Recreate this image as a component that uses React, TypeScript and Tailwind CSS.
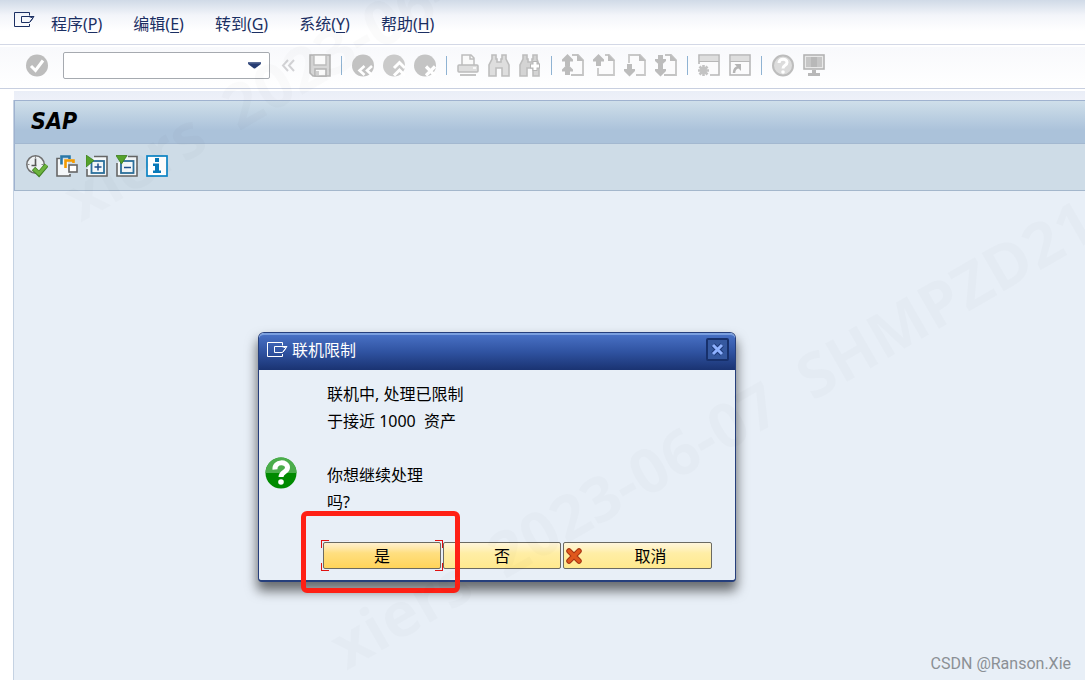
import type { ReactNode } from "react"

interface MenuEntry {
  label: string
  hotkey: string
}

interface ToolIcon {
  title: string
  art: ReactNode
}

const menus: MenuEntry[] = [
  { label: "程序", hotkey: "P" },
  { label: "编辑", hotkey: "E" },
  { label: "转到", hotkey: "G" },
  { label: "系统", hotkey: "Y" },
  { label: "帮助", hotkey: "H" },
]

const pageSheet = <path d="M10 1h6l5 5v15H9" fill="#fbfbfc" stroke="#c4c4c4" strokeWidth="1.800" />
const pageFold = <path d="M15 0v7h7z" fill="#bdbdbd" />
const arrowUp = "M5.500 0L11 5.500v2H8V12H3V7.500H0v-2z"
const arrowDown = "M3 10h5v5h3v2l-5.500 5.500L0 17v-2h3z"

// Standard toolbar, one array per separator group
const toolGroups: ToolIcon[][] = [
  [
    {
      title: "保存",
      art: (
        <>
          <path d="M1 1h20v21H4l-3-3z" fill="#d6d6d6" stroke="#b4b4b4" strokeWidth="1.600" />
          <path d="M5 1h12v10H5z" fill="#fafafa" stroke="#bcbcbc" strokeWidth="1.400" />
          <path d="M6 15h11v7H6z" fill="#fafafa" stroke="#b4b4b4" strokeWidth="1.600" />
          <path d="M7 17h3v4H7z" fill="#d0d0d0" />
        </>
      ),
    },
  ],
  [
    {
      title: "返回",
      art: (
        <>
          <circle cx="11" cy="11.500" r="11" fill="#c2c2c2" />
          <path d="M12.500 12l-5 4.500 5 4.500M20 12l-5 4.500 5 4.500" fill="none" stroke="#fff" strokeWidth="2.600" />
        </>
      ),
    },
    {
      title: "退出",
      art: (
        <>
          <circle cx="11" cy="11.500" r="11" fill="#cacaca" />
          <path d="M11 14l5.500-5.500L22 14M11 21.500l5.500-5.500 5.500 5.500" fill="none" stroke="#fff" strokeWidth="3" />
        </>
      ),
    },
    {
      title: "中止",
      art: (
        <>
          <circle cx="11" cy="11.500" r="11" fill="#c4c4c4" />
          <path d="M12 12.500l9 9M21 12.500l-9 9" stroke="#fff" strokeWidth="3.200" />
        </>
      ),
    },
  ],
  [
    {
      title: "打印",
      art: (
        <>
          <path d="M5 11V1h9l3 3v7" fill="#fafafa" stroke="#bdbdbd" strokeWidth="1.500" />
          <path d="M13 1v4h4" fill="none" stroke="#bdbdbd" strokeWidth="1.500" />
          <rect x="1" y="11" width="20" height="7" rx="1" fill="#dedede" stroke="#bcbcbc" strokeWidth="1.500" />
          <path d="M16 14h3" stroke="#fff" strokeWidth="1.500" />
          <path d="M3 20h16v2H3z" fill="#c4c4c4" />
        </>
      ),
    },
    {
      title: "查找",
      art: (
        <path
          d="M4 1h4v4h1v3h4V5h1V1h4v4l3 6v11h-7v-8H8v8H1V11l3-6z"
          fill="#dedede"
          stroke="#bdbdbd"
          strokeWidth="1.600"
        />
      ),
    },
    {
      title: "继续查找",
      art: (
        <>
          <path
            d="M4 1h4v4h1v3h4V5h1V1h4v4l2 6v11h-6v-8H8v8H1V11l3-6z"
            fill="#d4d4d4"
            stroke="#bdbdbd"
            strokeWidth="1.600"
          />
          <path d="M16 7v10M11 12h10" stroke="#b5b5b5" strokeWidth="5" />
          <path d="M16 8v8M12 12h8" stroke="#fff" strokeWidth="3" />
        </>
      ),
    },
  ],
  [
    {
      title: "第一页",
      art: (
        <>
          {pageSheet}
          {pageFold}
          <path d={arrowUp} fill="#bcbcbc" />
          <path d="M5.500 10l5.500 5.500v2H8V21H3v-3.500H0v-2z" fill="#bcbcbc" />
        </>
      ),
    },
    {
      title: "上一页",
      art: (
        <>
          <path d="M12 1h4l5 5v15H5v-7" fill="#fbfbfc" stroke="#c8c8c8" strokeWidth="1.800" />
          {pageFold}
          <path d={arrowUp} fill="#bcbcbc" />
        </>
      ),
    },
    {
      title: "下一页",
      art: (
        <>
          <path d="M5 9V1h11l5 5v15h-9" fill="#fbfbfc" stroke="#c8c8c8" strokeWidth="1.800" />
          {pageFold}
          <path d={arrowDown} fill="#bcbcbc" />
        </>
      ),
    },
    {
      title: "最后一页",
      art: (
        <>
          {pageSheet}
          {pageFold}
          <path d="M3 1h5v4h3v2l-5.500 5L0 7V5h3z" fill="#bcbcbc" />
          <path d={arrowDown} fill="#bcbcbc" />
        </>
      ),
    },
  ],
  [
    {
      title: "新建会话",
      art: (
        <>
          <path d="M1 10V1h20v20h-9" fill="#fbfbfc" stroke="#b8b8b8" strokeWidth="1.600" />
          <path d="M2 2h18v5H2z" fill="#dedede" />
          <path d="M1 7.500h20" stroke="#b8b8b8" />
          <path d="M5.500 11v11M0 16.500h11M1.500 12.500l8 8M9.500 12.500l-8 8" stroke="#c3c3c3" strokeWidth="2.600" />
        </>
      ),
    },
    {
      title: "创建快捷方式",
      art: (
        <>
          <rect x="1" y="1" width="20" height="20" fill="#fbfbfc" stroke="#b8b8b8" strokeWidth="1.600" />
          <path d="M2 2h18v5H2z" fill="#dedede" />
          <path d="M1 7.500h20" stroke="#b8b8b8" />
          <path d="M5 19c0-4 2-5.500 5-6" fill="none" stroke="#b5b5b5" strokeWidth="2.500" />
          <path d="M5.500 10H12v7z" fill="#b5b5b5" />
        </>
      ),
    },
  ],
  [
    {
      title: "帮助",
      art: (
        <>
          <circle cx="11" cy="11.500" r="10" fill="#dcdcdc" stroke="#bdbdbd" strokeWidth="2" />
          <path d="M7 9c0-5 8-5 8-.5 0 3-4 2.500-4 6" fill="none" stroke="#fff" strokeWidth="3" />
          <circle cx="11" cy="18" r="1.800" fill="#fff" />
        </>
      ),
    },
    {
      title: "定制本地布局",
      art: (
        <>
          <rect x="1" y="1" width="20" height="14" fill="#e8e8e8" stroke="#b4b4b4" strokeWidth="1.600" />
          <path d="M3 3h16v10H3z" fill="#c6c6c6" />
          <path d="M8 3h6v10H8z" fill="#b8b8b8" />
          <path d="M9 16h4v4H9zM5 19h12v3H5z" fill="#b8b8b8" />
        </>
      ),
    },
  ],
]

const appTools: ToolIcon[] = [
  {
    title: "执行",
    art: (
      <>
        <circle cx="9.500" cy="9.500" r="8.700" fill="#eef2f4" stroke="#6f6f6f" strokeWidth="1.500" />
        <path d="M9.500 3.500V11M5.500 10.500h5" stroke="#555" strokeWidth="1.600" />
        <path d="M9.500 1v2M1.500 9.500h2M15.500 9.500h2M9.500 15v2" stroke="#888" />
        <path d="M7.500 13.500l5.500 5.500 7.500-9" fill="none" stroke="#3f7f22" strokeWidth="4.800" />
        <path d="M8 14l5 4.500 7.500-8.500" fill="none" stroke="#6cb33e" strokeWidth="3.200" />
      </>
    ),
  },
  {
    title: "获取变式",
    art: (
      <>
        <path d="M4 3.500H1V21h13v-2" fill="#f2f5f7" stroke="#666" strokeWidth="1.600" />
        <path d="M2 4.500h10V20H2z" fill="#f4f7f9" />
        <path d="M5.500 9.500V1.500h8V4" fill="none" stroke="#2b78a8" strokeWidth="2.600" />
        <path d="M9.500 13V5.500h8V8" fill="none" stroke="#f59b00" strokeWidth="2.600" />
        <rect x="13" y="10" width="8" height="7" fill="#fff" stroke="#666" strokeWidth="1.600" />
      </>
    ),
  },
  {
    title: "展开",
    art: (
      <>
        <path d="M8 1.500h13V21H1v-7" fill="#f4f8fa" stroke="#666" strokeWidth="1.600" />
        <rect x="5.500" y="6" width="12.500" height="12" fill="#f4f8fa" stroke="#2b6f9c" strokeWidth="1.800" />
        <path d="M12 8.500v7M8.500 12h7" stroke="#1e4f8f" strokeWidth="1.500" />
        <path d="M0 0l8 5.500L0 12z" fill="#55a22b" stroke="#3b7d1d" strokeWidth=".8" />
      </>
    ),
  },
  {
    title: "折叠",
    art: (
      <>
        <path d="M12 1.500h9V21H1V8" fill="#f4f8fa" stroke="#666" strokeWidth="1.600" />
        <rect x="5" y="6" width="12.500" height="12" fill="#f4f8fa" stroke="#2b6f9c" strokeWidth="1.800" />
        <path d="M8 12.500h7" stroke="#1e4f8f" strokeWidth="1.500" />
        <path d="M0 .5h11L5.500 9z" fill="#55a22b" stroke="#3b7d1d" strokeWidth=".8" />
      </>
    ),
  },
  {
    title: "信息",
    art: (
      <>
        <rect x="1" y="1" width="20" height="20" fill="#fff" stroke="#0b83c4" strokeWidth="1.700" />
        <path d="M9 3h4v4H9zM7 8.500h6v7h2V18H7v-2.500h2v-4.500H7z" fill="#0879b9" />
      </>
    ),
  },
]

function SessionGlyph() {
  return (
    <svg width="21" height="16" viewBox="0 0 21 16" fill="none" stroke="currentColor" aria-hidden="true">
      <path d="M15.500 3.500v-3H.5v14h15V12" />
      <path d="M7.500 4.500h12.500l-4.500 6h-8z" />
      <path d="M15 4.500l4 1.500-3 4" />
    </svg>
  )
}

function IconButton({ title, art }: ToolIcon) {
  return (
    <button type="button" aria-label={title} className="w-[22px] h-[23px] shrink-0">
      <svg width="22" height="23" viewBox="0 0 22 23">
        {art}
      </svg>
    </button>
  )
}

function MenuBar() {
  return (
    <nav className="flex items-center h-11 pl-[14px] bg-linear-to-b from-[#d0dae7] via-[#f3f5fa] via-35% to-white to-70% text-[#1b2f63]">
      <button type="button" aria-label="会话" className="mr-4 -translate-y-0.5">
        <SessionGlyph />
      </button>
      <div className="flex gap-[31px] pt-1">
        {menus.map((m) => (
          <button type="button" key={m.hotkey} className="text-base leading-6">
            {m.label}(<u className="underline-offset-2">{m.hotkey}</u>)
          </button>
        ))}
      </div>
    </nav>
  )
}

function StandardToolbar() {
  return (
    <div className="flex items-center h-[41px] pb-1 pl-[26px] gap-[9px] bg-linear-to-b from-[#f8f9fc] to-white">
      <button type="button" aria-label="确认" className="w-[22px] h-[23px] shrink-0">
        <svg width="22" height="23" viewBox="0 0 22 23">
          <circle cx="11" cy="11.500" r="11" fill="#bdbdbd" />
          <path d="M5 12l4.500 4.500L17 6.500" fill="none" stroke="#fff" strokeWidth="3" />
        </svg>
      </button>

      {/* Command field */}
      <div className="flex items-center w-[207px] h-[27px] shrink-0 ml-1.5 pr-2 border border-[#a6aab0] rounded-xs bg-white">
        <input type="text" aria-label="命令字段" className="flex-1 min-w-0 h-full px-1 text-base outline-none" />
        <button type="button" aria-label="历史记录">
          <svg width="13" height="7" viewBox="0 0 13 7">
            <path d="M0 0h13v2L7 6.500H6L0 2z" fill="#263c72" />
            <path d="M0 0h13v1.500H0z" fill="#5a6c96" />
          </svg>
        </button>
      </div>
      <button type="button" aria-label="收起" className="w-[21px] h-[23px] shrink-0">
        <svg width="21" height="23" viewBox="0 0 21 23" fill="none" stroke="#d2d2d5" strokeWidth="2">
          <path d="M9 6l-5 5.500L9 17M15 6l-5 5.500 5 5.500" />
        </svg>
      </button>

      {toolGroups.map((group, i) => (
        <div key={i} className="flex items-center gap-[9px]">
          {i > 0 && (
            <div className="flex justify-center w-[3px]">
              <div className="w-px h-[19px] bg-[#8fb3d3]" />
            </div>
          )}
          {group.map((tool) => (
            <IconButton key={tool.title} title={tool.title} art={tool.art} />
          ))}
        </div>
      ))}
    </div>
  )
}

function FocusCorners() {
  return (
    <>
      <span className="absolute -top-[3px] -left-[3px] size-2 border-t border-l border-[#e01010]" />
      <span className="absolute -top-[3px] -right-[3px] size-2 border-t border-r border-[#e01010]" />
      <span className="absolute -bottom-[3px] -left-[3px] size-2 border-b border-l border-[#e01010]" />
      <span className="absolute -bottom-[3px] -right-[3px] size-2 border-b border-r border-[#e01010]" />
    </>
  )
}

function LimitDialog() {
  return (
    <section
      role="dialog"
      aria-labelledby="dialog-title"
      className="absolute left-[258px] top-[332px] w-[478px] rounded-t-md rounded-b-sm border border-b-2 border-[#263f7c] bg-[#e8eff7] shadow-[0_8px_12px_1px_rgba(0,0,0,0.55)]"
    >
      <header className="flex items-center h-[37px] pl-2 pr-1.5 pb-1.5 rounded-t-[5px] border-t-2 border-[#7a9fdf] bg-linear-to-b from-[#4870c4] via-[#2f52a0] to-[#1a3372] text-white">
        <SessionGlyph />
        <h2 id="dialog-title" className="flex-1 ml-1 text-base leading-6">
          联机限制
        </h2>
        <button
          type="button"
          aria-label="关闭"
          className="flex items-center justify-center size-[23px] rounded-xs border-2 border-[#17306b] bg-[#35589f]"
        >
          <svg width="13" height="13" viewBox="0 0 13 13">
            <path d="M2 2l9 9M11 2l-9 9" stroke="#1c3878" strokeWidth="5" />
            <path d="M2 2l9 9M11 2l-9 9" stroke="#8fb2ff" strokeWidth="3" />
          </svg>
        </button>
      </header>

      <div className="flex items-center pt-[11px] pl-1.5">
        <svg width="32" height="32" viewBox="0 0 32 32" className="mt-12" aria-hidden="true">
          <circle cx="16" cy="16" r="15.500" fill="#008a00" />
          <path d="M.5 16a15.500 15.500 0 0 1 31 0z" fill="#4bad4b" />
          <path d="M10 12.500c-1-8.500 12.500-8.500 12.500-2 0 5-6.500 4-6.500 9.500" fill="none" stroke="#fff" strokeWidth="5" />
          <circle cx="16" cy="25" r="2.800" fill="#fff" />
        </svg>
        <div className="ml-[30px] text-base leading-[27px] text-black whitespace-pre">
          <p>联机中, 处理已限制</p>
          <p>于接近 1000  资产</p>
          <p> </p>
          <p>你想继续处理</p>
          <p>吗?</p>
        </div>
      </div>

      <div className="flex gap-0.5 h-[27px] mt-[26px] mb-[11px] ml-16 mr-[23px] text-base leading-6 text-black">
        <button
          type="button"
          className="relative flex-4 rounded-xs border border-[#6b6a62] bg-linear-to-b from-[#fff0d0] via-[#ffdf80] via-40% to-[#ffd459]"
        >
          是
          <FocusCorners />
        </button>
        <button
          type="button"
          className="flex-4 rounded-xs border border-[#6b6a62] bg-linear-to-b from-[#fff6dc] via-[#ffeea6] via-40% to-[#ffe98e]"
        >
          否
        </button>
        <button
          type="button"
          className="flex flex-5 items-center pl-0.5 rounded-xs border border-[#6b6a62] bg-linear-to-b from-[#fff6dc] via-[#ffeea6] via-40% to-[#ffe98e]"
        >
          <svg width="16" height="16" viewBox="0 0 16 16" aria-hidden="true">
            <path d="M3 3l10 10M13 3L3 13" stroke="#a53312" strokeWidth="5.500" strokeLinecap="round" />
            <path d="M3 3l10 10M13 3L3 13" stroke="#e0581c" strokeWidth="3.500" strokeLinecap="round" />
          </svg>
          <span className="flex-1 pl-2">取消</span>
        </button>
      </div>
    </section>
  )
}

function Watermark() {
  return (
    <div
      aria-hidden="true"
      className="absolute inset-0 overflow-hidden pointer-events-none select-none whitespace-nowrap font-['Open_Sans',sans-serif] font-bold text-[62px] leading-[62px] text-black/[0.015]"
    >
      <span className="absolute left-[84px] top-[167px] origin-bottom-left -rotate-30">xiers&nbsp; 2023-06-07</span>
      <span className="absolute left-[350px] top-[615px] origin-bottom-left -rotate-30">xiers&nbsp; 2023-06-07&nbsp; SHMPZD21</span>
    </div>
  )
}

export default function App() {
  return (
    <div className="relative flex flex-col min-h-screen overflow-hidden bg-white font-['Noto_Sans','Noto_Sans_CJK_SC',sans-serif]">
      <MenuBar />
      <div className="border-t border-[#d3d8e6] pt-0.5">
        <StandardToolbar />
      </div>

      <div className="flex flex-col flex-1 border-t border-[#c8cfe0] pt-0.5">
        <div className="ml-[14px] h-[9px] bg-linear-to-b from-[#eaeef7] to-[#eef1f9]" />
        <main className="flex flex-col flex-1 ml-[13px] border-l border-[#c5d2e2] bg-[#e8eff7]">
          <div className="h-[43px] pl-4 border-t border-l border-[#9fb2cf] bg-linear-to-b from-[#cfdfea] to-[#abc2da] to-70%">
            <h1 className="font-['DejaVu_Sans_Condensed','DejaVu_Sans',sans-serif] italic font-bold text-[23px] leading-10 text-black">
              SAP
            </h1>
          </div>
          <div className="flex items-center gap-2 h-12 pb-0.5 pl-[11px] border-y border-l border-t-[#a3b8d0] border-b-[#a4b7cc] border-l-[#9fb2cf] bg-[#cedce7]">
            {appTools.map((tool) => (
              <IconButton key={tool.title} title={tool.title} art={tool.art} />
            ))}
          </div>
        </main>
      </div>

      <LimitDialog />

      {/* Callout around the confirm button */}
      <div className="absolute left-[301px] top-[511px] w-[159px] h-[82px] border-[5px] border-[#ff2015] rounded-md pointer-events-none" />

      <Watermark />

      <p className="absolute right-[14px] bottom-1.5 font-['Roboto',sans-serif] text-base leading-5 text-[#8b9095]">
        CSDN @Ranson.Xie
      </p>
    </div>
  )
}
